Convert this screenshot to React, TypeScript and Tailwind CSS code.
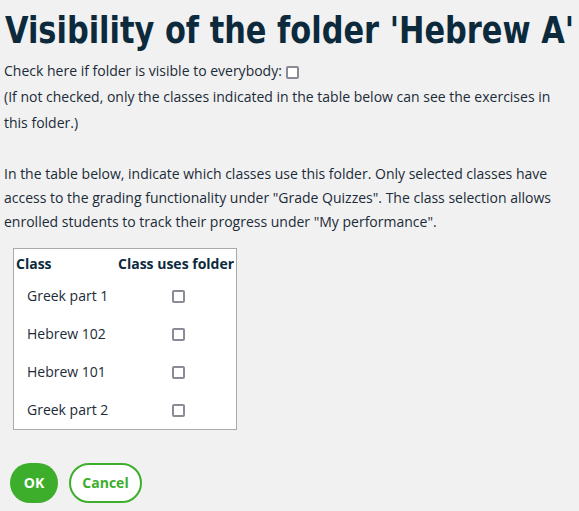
const classes = ['Greek part 1', 'Hebrew 102', 'Hebrew 101', 'Greek part 2'];

function Box() {
  return <span className="inline-block w-[13px] h-[13px] border-2 border-[#8b8a96] rounded-[2px] bg-white align-middle" />;
}

export default function App() {
  return (
    <div className="min-h-[511px] bg-[#f1f1f1] px-1 pt-1 text-[14px] leading-[26px] text-[#1b2b38]" style={{ fontFamily: '"Open Sans", sans-serif' }}>
      <h1
        className="ml-[1px] text-[38px] leading-[52px] font-bold text-[#0c2a3c] whitespace-nowrap origin-left scale-x-[0.89]"
        style={{ fontFamily: '"DejaVu Sans Condensed", "DejaVu Sans", sans-serif' }}
      >
        Visibility of the folder 'Hebrew A'
      </h1>
      <p className="mt-[2px]">
        Check here if folder is visible to everybody: <Box />
        <br />
        (If not checked, only the classes indicated in the table below can see the exercises in this folder.)
      </p>
      <p className="mt-[26px] leading-[24px]">
        In the table below, indicate which classes use this folder. Only selected classes have access to the grading
        functionality under "Grade Quizzes". The class selection allows enrolled students to track their progress under
        "My performance".
      </p>
      <div className="mt-[14px] ml-[9px] w-[224px] border border-[#aaaaaa] bg-white">
        <div className="flex items-center h-[28px] pt-[2px] font-bold text-[#0c2a3c]">
          <span className="w-[104px] pl-[2px]">Class</span>
          <span>Class uses folder</span>
        </div>
        {classes.map((c) => (
          <div key={c} className="flex items-center h-[38px]">
            <span className="w-[158px] pl-[13px]">{c}</span>
            <Box />
          </div>
        ))}
      </div>
      <div className="mt-[33px] ml-[6px] flex gap-[11px]">
        <button className="h-[40px] w-[48px] rounded-full bg-[#3dae2b] text-white font-bold">OK</button>
        <button className="h-[40px] w-[73px] rounded-full border-2 border-[#3dae2b] bg-white text-[#3dae2b] font-bold">
          Cancel
        </button>
      </div>
    </div>
  );
}
